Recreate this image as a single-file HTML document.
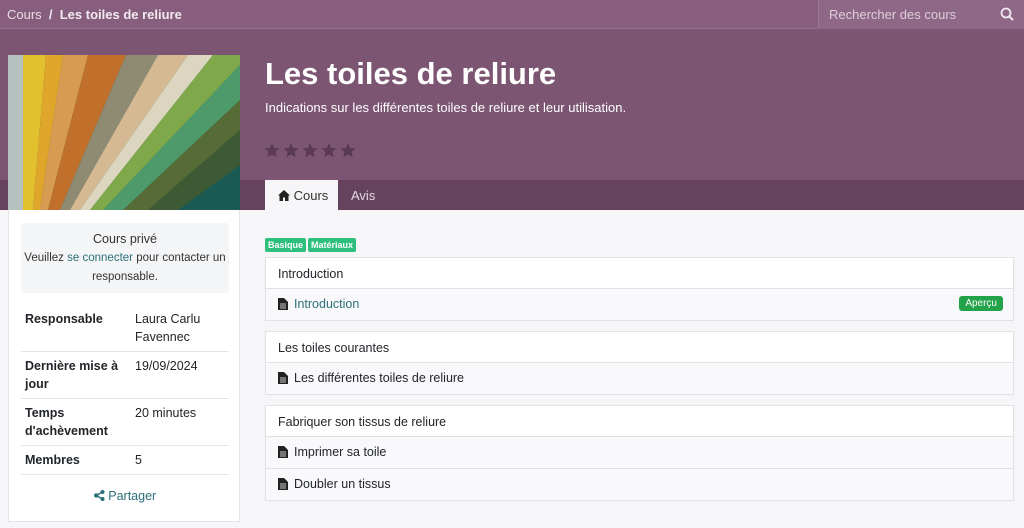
<!DOCTYPE html>
<html><head><meta charset="utf-8"><style>
*{box-sizing:border-box;margin:0;padding:0}
body{width:1024px;height:528px;overflow:hidden;font-family:"Liberation Sans",sans-serif;font-size:13px;color:#212529;background:#f6f6f8;position:relative}
.hdr{position:absolute;left:0;top:0;width:1024px;height:210px;background:#7c5572}
.top{position:absolute;left:0;top:0;width:1024px;height:29px;background:#875e7e;border-bottom:1px solid #936d8b}
.bc{position:absolute;left:7px;top:7px;color:#e8dce5;font-size:13px}
.bc b{color:#f2eaf0}
.search{position:absolute;left:818px;top:0;width:206px;height:29px;background:#8f6888;border-left:1px solid #9a7693;color:#ddcfda;font-size:13px;padding:7px 10px}
.band{position:absolute;left:0;top:180px;width:1024px;height:30px;background:#65435c}
.img{position:absolute;left:8px;top:55px;width:232px;height:155px;overflow:hidden}
h1{position:absolute;left:265px;top:56px;color:#fff;font-size:31px;font-weight:bold}
.sub{position:absolute;left:265px;top:100px;color:#fff;font-size:13px}
.stars{position:absolute;left:264px;top:142px}
.tab{position:absolute;top:180px;height:30px;padding:8px 12px;font-size:13px;white-space:nowrap}
.card{position:absolute;left:8px;top:210px;width:232px;height:312px;background:#fff;border:1px solid #e4e4e8;border-top:none}
.priv{position:absolute;left:12px;top:13px;width:208px;height:70px;background:#f4f5f7;border-radius:3px;text-align:center;font-size:11.5px;line-height:19px;padding-top:7px;color:#333}
.priv .t{font-size:12.5px}
a{color:#2b6f79;text-decoration:none}
table{position:absolute;left:12px;top:95px;width:208px;border-collapse:collapse;font-size:12.5px}
td{vertical-align:top;padding:5px 4px;line-height:18px;border-bottom:1px solid #e5e5e5}
td:first-child{font-weight:bold;width:110px}
.share{position:absolute;left:0;width:232px;top:279px;text-align:center;font-size:12.5px}
.tags{position:absolute;left:265px;top:236px}
.tag{display:inline-block;background:#2dbf7c;color:#fff;font-size:9px;font-weight:bold;padding:2px 3px;border-radius:2px;margin-right:2px}
.sec{position:absolute;left:265px;width:749px;background:#fff;border:1px solid #e2e2e6;height:32px;padding:9px 12px;font-size:12.5px;box-shadow:0 1px 2px rgba(0,0,0,.06)}
.row{position:absolute;left:265px;width:749px;background:#f9f9fb;border:1px solid #e2e2e6;border-top:none;height:32px;padding:8px 12px;font-size:12.5px}
.doc{display:inline-block;width:10px;height:12px;margin-right:6px;vertical-align:-2px}
.ap{position:absolute;right:10px;top:7px;background:#22a34a;color:#fff;font-size:10px;padding:2px 6px;border-radius:3px}
</style></head><body>
<div class="hdr"></div>
<div class="top"><div class="bc">Cours &nbsp;<b>/ &nbsp;Les toiles de reliure</b></div>
<div class="search">Rechercher des cours<svg style="position:absolute;right:10px;top:7px" width="14" height="14" viewBox="0 0 14 14"><circle cx="6" cy="6" r="4.5" stroke="#f0e8ee" stroke-width="1.8" fill="none"/><path d="M9.3 9.3L13 13" stroke="#f0e8ee" stroke-width="2"/></svg></div></div>
<div class="band"></div>
<div class="img"><svg width="232" height="155" viewBox="0 0 232 155">
<rect width="232" height="155" fill="#1a5a52"/>
<polygon points="0,0 15,0 15,155 0,155" fill="#b6c2bf"/>
<polygon points="15,0 38,0 25,155 15,155" fill="#e3c12e"/>
<polygon points="38,0 55,0 32,155 25,155" fill="#e0a62b"/>
<polygon points="55,0 80,0 40,155 32,155" fill="#d89b52"/>
<polygon points="80,0 118,0 52,155 40,155" fill="#c0702a"/>
<polygon points="118,0 150,0 62,155 52,155" fill="#8f8a72"/>
<polygon points="150,0 180,0 72,155 62,155" fill="#d5b992"/>
<polygon points="180,0 205,0 82,155 72,155" fill="#dcd6c0"/>
<polygon points="205,0 232,0 232,10 95,155 82,155" fill="#7fa84a"/>
<polygon points="232,10 232,45 115,155 95,155" fill="#4f9a6a"/>
<polygon points="232,45 232,75 140,155 115,155" fill="#566b36"/>
<polygon points="232,75 232,110 170,155 140,155" fill="#3e5a34"/>
</svg></div>
<h1>Les toiles de reliure</h1>
<div class="sub">Indications sur les différentes toiles de reliure et leur utilisation.</div>
<div class="stars"><svg width="92" height="18" viewBox="0 0 92 18" fill="#5a3a52">
<g id="s"><path d="M8 1l2.2 5 5.3.4-4 3.5 1.2 5.3L8 12.4 3.3 15.2l1.2-5.3-4-3.5 5.3-.4z"/></g>
<use href="#s" x="19"/><use href="#s" x="38"/><use href="#s" x="57"/><use href="#s" x="76"/></svg></div>
<div class="tab" style="left:265px;width:73px;padding-left:13px;background:#f6f6f8;color:#333"><svg width="12" height="11" viewBox="0 0 12 11" style="vertical-align:-1px"><path d="M6 0L0 5.5h1.5V11h3.5V7.5h2V11h3.5V5.5H12z" fill="#222"/></svg> Cours</div>
<div class="tab" style="left:339px;color:#e6d8e2">Avis</div>
<div class="card">
<div class="priv"><div class="t">Cours privé</div>Veuillez <a>se connecter</a> pour contacter un responsable.</div>
<table>
<tr><td>Responsable</td><td>Laura Carlu Favennec</td></tr>
<tr><td>Dernière mise à jour</td><td>19/09/2024</td></tr>
<tr><td>Temps d'achèvement</td><td>20 minutes</td></tr>
<tr><td>Membres</td><td>5</td></tr>
</table>
<div class="share"><a><svg width="11" height="11" viewBox="0 0 11 11" style="vertical-align:-1px"><circle cx="8.5" cy="2" r="2" fill="#2b6f79"/><circle cx="8.5" cy="9" r="2" fill="#2b6f79"/><circle cx="2.2" cy="5.5" r="2.2" fill="#2b6f79"/><path d="M8.5 2L2.2 5.5 8.5 9" stroke="#2b6f79" stroke-width="1.5" fill="none"/></svg> Partager</a></div>
</div>
<div class="tags"><span class="tag">Basique</span><span class="tag">Matériaux</span></div>
<svg width="0" height="0" style="position:absolute"><defs><g id="d"><path d="M0 0h6l4 4v8H0z" fill="#222"/><path d="M2 6h6M2 8h6M2 10h6" stroke="#fff" stroke-width="0.8"/></g></defs></svg>
<div class="sec" style="top:257px">Introduction</div>
<div class="row" style="top:289px"><svg class="doc"><use href="#d"/></svg><a>Introduction</a><span class="ap">Aperçu</span></div>
<div class="sec" style="top:331px">Les toiles courantes</div>
<div class="row" style="top:363px"><svg class="doc"><use href="#d"/></svg>Les différentes toiles de reliure</div>
<div class="sec" style="top:405px">Fabriquer son tissus de reliure</div>
<div class="row" style="top:437px"><svg class="doc"><use href="#d"/></svg>Imprimer sa toile</div>
<div class="row" style="top:469px"><svg class="doc"><use href="#d"/></svg>Doubler un tissus</div>
</body></html>
